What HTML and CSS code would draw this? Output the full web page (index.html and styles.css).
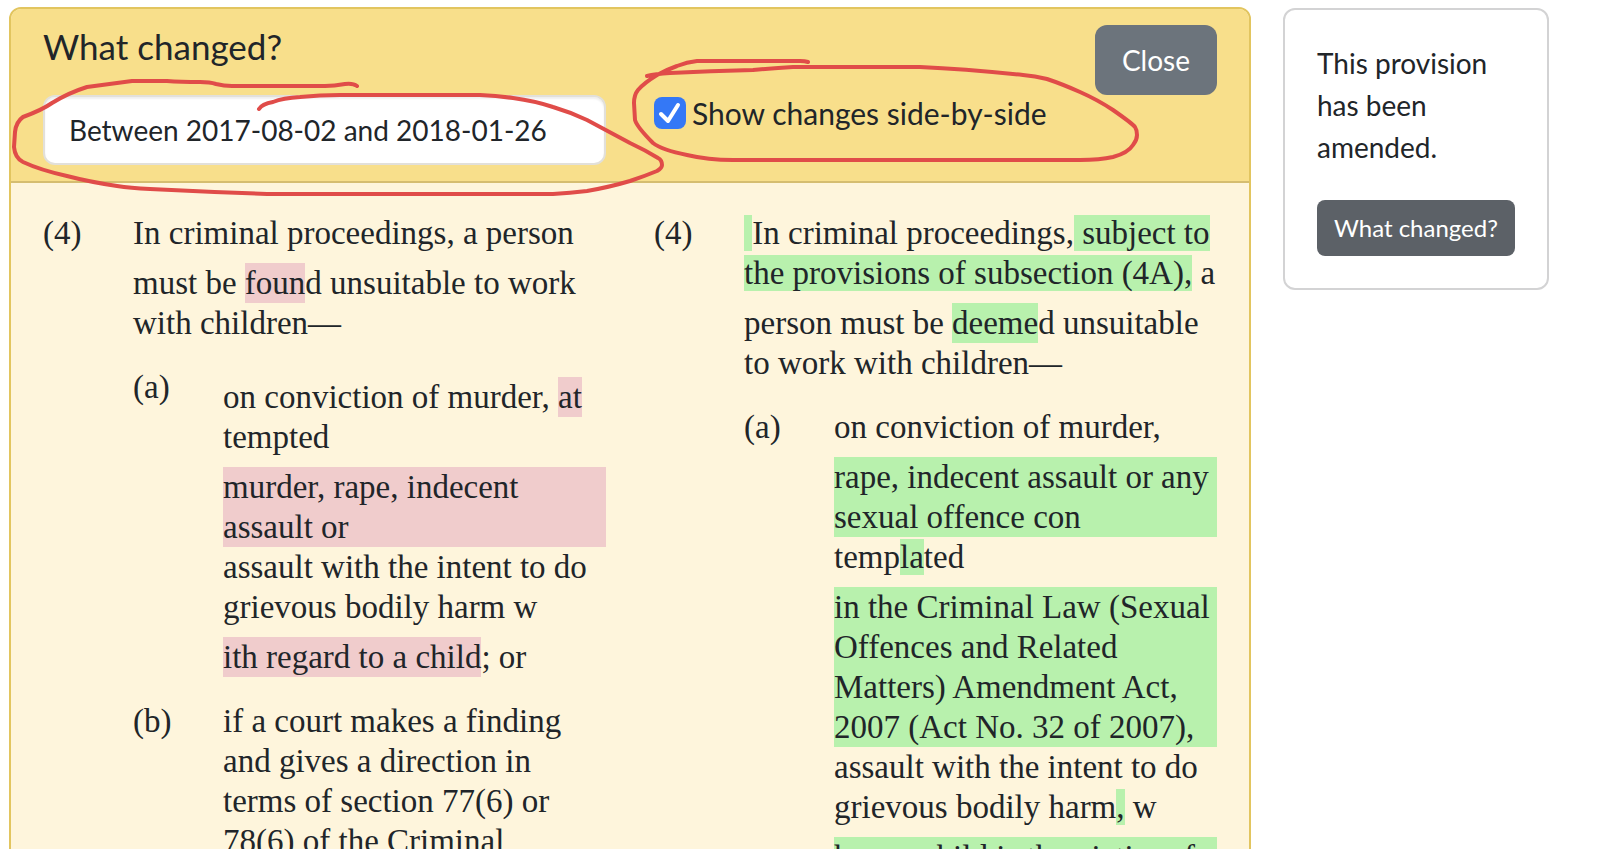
FILE: index.html
```
<!DOCTYPE html>
<html lang="en">
<head>
<meta charset="utf-8">
<title>What changed?</title>
<link rel="stylesheet" href="styles.css">
</head>
<body>
<div class="page">
  <main class="diff-card">
    <header class="diff-header">
      <div class="header-col">
        <h1 class="title">What changed?</h1>
        <select class="range" aria-label="Date range"><option>Between 2017-08-02 and 2018-01-26</option></select>
      </div>
      <div class="header-col header-tools">
        <label class="toggle"><input class="toggle-box" type="checkbox" checked><span>Show changes side-by-side</span></label>
        <button class="btn btn-close" type="button">Close</button>
      </div>
    </header>
    <div class="diff-body">
      <section class="provision">
        <span class="num">(4)</span>
        <div class="content">
          <p>In criminal proceedings, a person<br>must be <del class="chip">foun</del>d unsuitable to work<br>with children—</p>
          <div class="provision">
            <span class="num">(a)</span>
            <div class="content">
              <p>on conviction of murder, <del class="chip">at</del><br>tempted</p>
              <p><del class="block">murder, rape, indecent<br>assault or</del></p>
              <p>assault with the intent to do<br>grievous bodily harm w<br><del class="chip">ith regard to a child</del>; or</p>
            </div>
          </div>
          <div class="provision">
            <span class="num">(b)</span>
            <div class="content">
              <p>if a court makes a finding<br>and gives a direction in<br>terms of section 77(6) or<br>78(6) of the Criminal</p>
            </div>
          </div>
        </div>
      </section>
      <section class="provision">
        <span class="num">(4)</span>
        <div class="content">
          <p><ins>&nbsp;</ins>In criminal proceedings,<ins> subject to<br>the provisions of subsection (4A),</ins> a<br>person must be <ins class="chip">deeme</ins>d unsuitable<br>to work with children—</p>
          <div class="provision">
            <span class="num">(a)</span>
            <div class="content">
              <p>on conviction of murder,</p>
              <p><ins class="block">rape, indecent assault or any<br>sexual offence con</ins></p>
              <p>temp<ins>la</ins>ted</p>
              <p><ins class="block">in the Criminal Law (Sexual<br>Offences and Related<br>Matters) Amendment Act,<br>2007 (Act No. 32 of 2007),</ins></p>
              <p>assault with the intent to do<br>grievous bodily harm<ins>,</ins> w</p>
              <p><ins class="block">here a child is the victim of</ins></p>
            </div>
          </div>
        </div>
      </section>
    </div>
  </main>
  <aside class="notice">
    <p class="notice-text">This provision has been amended.</p>
    <button class="btn btn-small" type="button">What changed?</button>
  </aside>
  <svg class="marks" width="1160" height="210" viewBox="0 0 1160 210" aria-hidden="true">
    <path d="M357 86Q353 83 345 84Q334 86 325 86H232Q224 86 216 84Q210 82 200 82Q180 82 167 81H132Q110 84 87 87Q68 93 52 103Q42 110 23 117Q16 122 15 132L14 147Q15 158 23 162Q40 170 67 176Q90 182 117 186Q130 188 150 189Q210 192 267 194H553Q570 193 587 191Q610 187 630 181Q645 176 657 171Q662 168 662 165Q662 160 658 158Q645 150 630 143L587 120Q570 112 553 107Q535 101 513 98Q498 96 480 95H340Q320 95 300 97Q283 98 273 102Q262 104 259 109"/>
    <path d="M808 62Q805 61 800 61H697Q687 62 677 66Q666 70 657 75Q644 83 638 90Q634 95 634 103L635 120Q637 127 653 143Q662 150 687 155Q708 160 733 160H1080Q1100 160 1113 157Q1128 153 1133 145Q1137 140 1137 135Q1137 130 1135 127Q1133 124 1113 110Q1098 100 1080 92Q1062 84 1047 79Q1035 76 1023 75Q965 69 920 67H793Q775 68 753 70Q710 71 670 73Q655 74 647 76"/>
  </svg>
</div>
</body>
</html>
```
FILE: styles.css
```
* { box-sizing: border-box; }
body { margin: 0; background: #fff; color: #212529; font-family: Lato, "Liberation Sans", sans-serif; font-size: 28px; line-height: 42px; }
p { margin: 0; }
.page { position: relative; display: flex; align-items: flex-start; gap: 32px; height: 100vh; padding: 7px 56px 0 9px; overflow: hidden; }
.diff-card { flex: 1; border: 2px solid #e2c55f; border-radius: 12px; background: #fef5dc; overflow: hidden; }
.diff-header, .diff-body { display: grid; grid-template-columns: 1fr 1fr; column-gap: 48px; padding: 0 32px; }
.diff-header { padding-top: 16px; padding-bottom: 16px; background: #f8df8b; border-bottom: 2px solid #d5bd70; }
.title { margin: 0 0 28px; font-size: 35px; line-height: 42px; font-weight: 400; }
.range { display: block; appearance: none; width: 100%; height: 70px; padding: 0 24px; border: 2px solid #e2e0da; border-radius: 12px; background: #fff; box-shadow: inset 0 2px 2px #0001; color: inherit; font: inherit; }
.header-tools { display: flex; justify-content: space-between; align-items: flex-start; }
.toggle { display: flex; align-items: center; gap: 6px; margin-top: 67px; font-size: 30px; }
.toggle-box { appearance: none; width: 32px; height: 32px; margin: 0; border-radius: 8px; background: #3478f6 url("data:image/svg+xml,%3Csvg xmlns='http://www.w3.org/2000/svg' viewBox='0 0 32 32'%3E%3Cpath d='M7 17l7 7L24 8' fill='none' stroke='white' stroke-width='4' stroke-linecap='round' stroke-linejoin='round'/%3E%3C/svg%3E"); }
.btn { border: 0; color: #fff; font: inherit; }
.btn-close { height: 70px; padding: 0 27px; border-radius: 12px; background: #6c747c; }
.diff-body { padding-top: 30px; font-family: Palatino, "Palatino Linotype", "Liberation Serif", serif; font-size: 33px; line-height: 40px; white-space: nowrap; }
.provision { display: flex; align-items: flex-start; }
.content > .provision { margin-top: 24px; }
.num { flex: 0 0 90px; }
.content { flex: 1; min-width: 0; }
del, ins { text-decoration: none; }
del { background: #f0cccc; }
ins { background: #b8f1ad; }
.chip { display: inline-block; margin-top: 10px; }
.block { display: block; margin-top: 10px; }
.notice { flex: 0 0 266px; margin-top: 1px; padding: 32px; border: 2px solid #d3d3d4; border-radius: 12px; }
.notice-text { margin-bottom: 32px; }
.btn-small { width: 100%; height: 56px; padding: 0; border-radius: 8px; background: #5c6167; font-size: 24px; }
.marks { position: absolute; top: 0; left: 0; fill: none; stroke: #e04c49; stroke-width: 4; stroke-linecap: round; stroke-linejoin: round; pointer-events: none; }
```
